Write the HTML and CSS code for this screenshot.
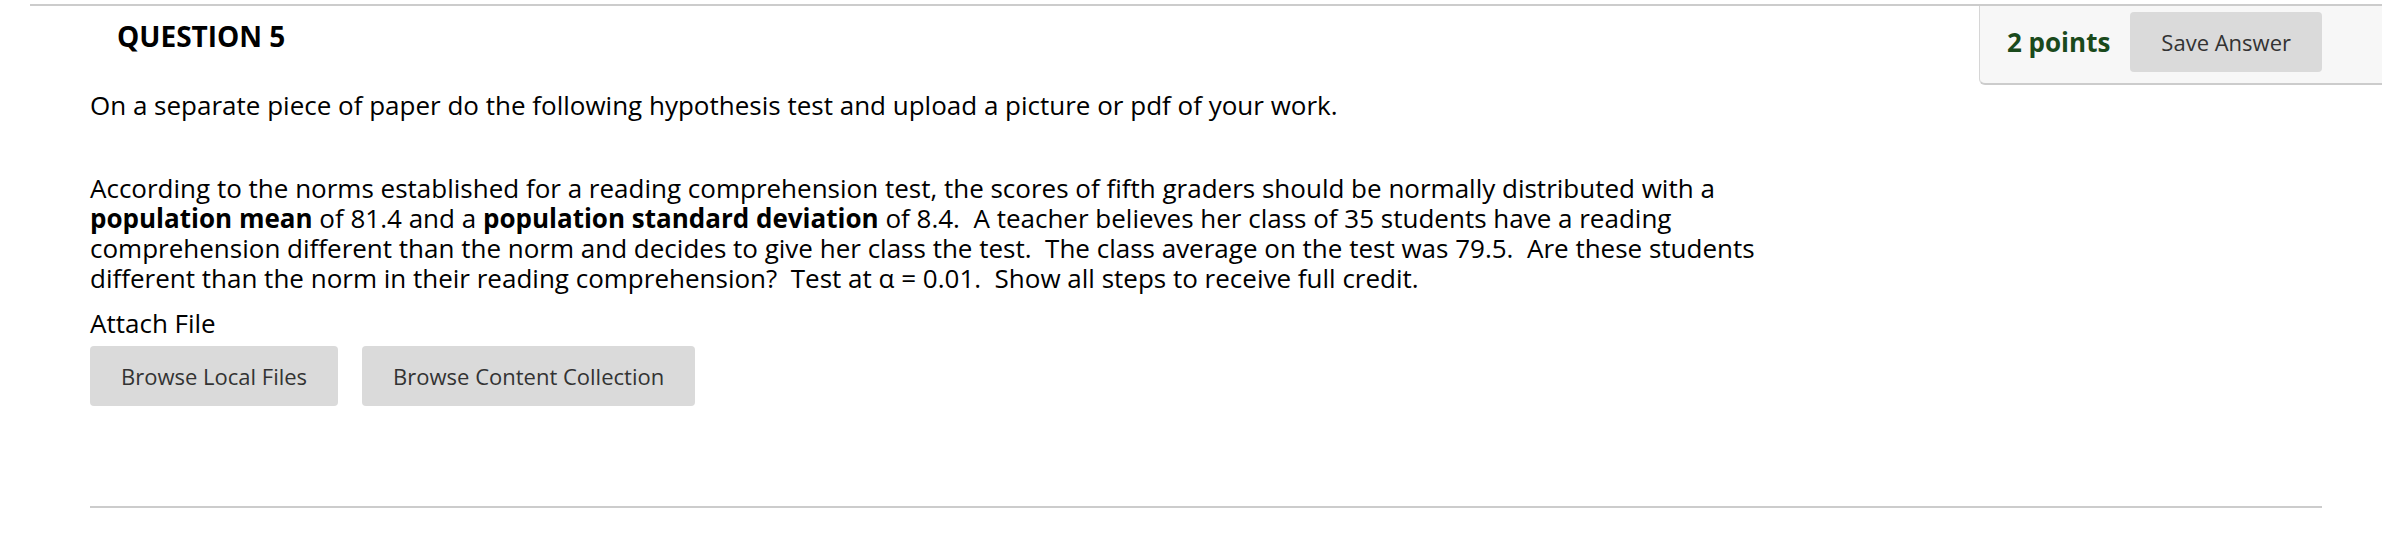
FILE: index.html
```html
<!DOCTYPE html>
<html lang="en">

<head>
    <meta charset="UTF-8">
    <meta name="viewport" content="width=device-width, initial-scale=1.0">
    <title>Question 5</title>
    <link rel="stylesheet" href="styles.css">
</head>

<body>
    <div class="question-item">
        <div class="item-head">
            <h3 class="item-title">QUESTION 5</h3>
            <div class="points-box">
                <span class="points">2 points</span>
                <button class="btn">Save Answer</button>
            </div>
        </div>
        <div class="item-body">
            <p class="intro">On a separate piece of paper do the following hypothesis test and upload a picture or pdf of your work.</p>
            <p class="question-text">According to the norms established for a reading comprehension test, the scores of fifth graders should be normally distributed with a <b>population mean</b> of 81.4 and a <b>population standard deviation</b> of 8.4.&nbsp; A teacher believes her class of 35 students have a reading comprehension different than the norm and decides to give her class the test.&nbsp; The class average on the test was 79.5.&nbsp; Are these students different than the norm in their reading comprehension?&nbsp; Test at α = 0.01.&nbsp; Show all steps to receive full credit.</p>
            <div class="attach">
                <label class="attach-label">Attach File</label>
                <div class="attach-btns">
                    <button class="btn">Browse Local Files</button>
                    <button class="btn">Browse Content Collection</button>
                </div>
            </div>
        </div>
    </div>
</body>

</html>
```

FILE: styles.css
```css
body {
    margin: 0;
    padding: 0;
    background-color: #fff;
    color: #000;
    font-family: "Open Sans", "Liberation Sans", sans-serif;
}

.question-item {
    margin: 4px 22px 0 30px;
    border-top: 2px solid #ccc;
}

.item-head {
    display: flex;
    justify-content: space-between;
    align-items: flex-start;
}

.item-title {
    margin: 11px 0 0 87px;
    font: bold 28px/38px "Open Sans", sans-serif;
}

.points-box {
    display: flex;
    align-items: center;
    gap: 20px;
    padding: 6px 60px 11px 27px;
    background-color: #f7f7f7;
    border-left: 1px solid #d6d6d6;
    border-bottom: 2px solid #ccc;
    border-bottom-left-radius: 6px;
}

.points {
    color: #1a4a1c;
    font: bold 26px/36px "Open Sans", sans-serif;
}

.btn {
    height: 60px;
    padding: 0 31px;
    border: none;
    border-radius: 4px;
    background-color: #dadada;
    color: #333;
    font: normal 22px "Open Sans", sans-serif;
    cursor: pointer;
}

.item-body {
    margin: 0 60px;
    padding-bottom: 100px;
    border-bottom: 2px solid #ccc;
    font-size: 26px;
    line-height: 30px;
}

.intro {
    margin: 5px 0 0;
}

.question-text {
    width: 1710px;
    margin: 53px 0 0;
}

.attach {
    margin-top: 15px;
}

.attach-label {
    display: block;
}

.attach-btns {
    display: flex;
    gap: 24px;
    margin-top: 8px;
}
```
